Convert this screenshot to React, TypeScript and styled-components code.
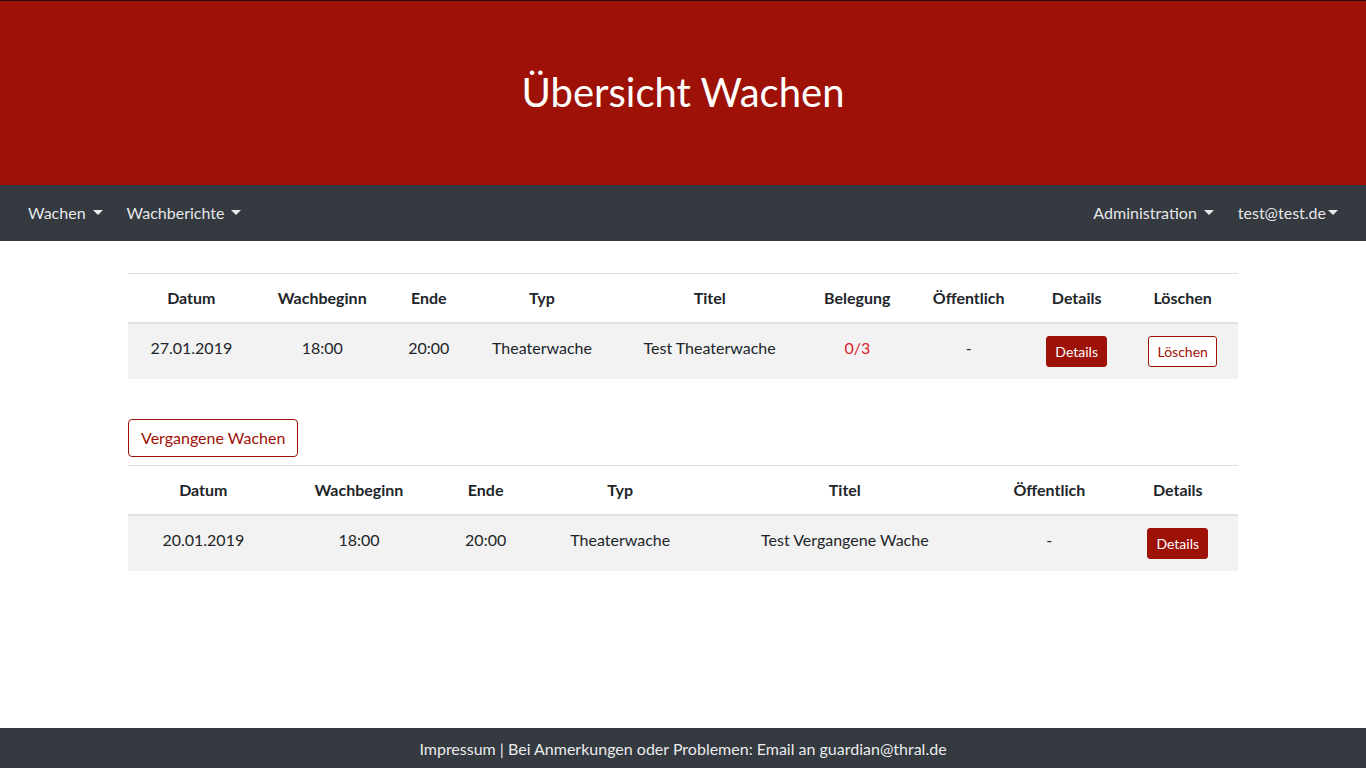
import React from "react";
import styled, { createGlobalStyle } from "styled-components";

const FONT = `"Lato", "Noto Sans", "Liberation Sans", sans-serif`;

const Global = createGlobalStyle`
  html, body { margin: 0; padding: 0; }
  body {
    font-family: ${FONT};
    font-size: 16px;
    line-height: 1.5;
    color: #212529;
    background: #fff;
  }
  * { box-sizing: border-box; }
`;

const Page = styled.div`
  min-height: 768px;
  display: flex;
  flex-direction: column;
`;

const Header = styled.header`
  height: 185px;
  background: #9e1106;
  border-top: 1px solid #2b0a08;
  display: flex;
  align-items: center;
  justify-content: center;
`;

const Title = styled.h1`
  margin: 0 0 2px;
  font-weight: 400;
  font-size: 40px;
  line-height: 1.2;
  color: #fff;
`;

const Navbar = styled.nav`
  height: 56px;
  background: #343a40;
  display: flex;
  align-items: center;
  justify-content: space-between;
  padding: 0 16px;
`;

const NavGroup = styled.div`
  display: flex;
  align-items: center;
`;

const NavLink = styled.a<{ $tight?: boolean }>`
  color: rgba(255, 255, 255, 0.9);
  padding: 8px 12px;
  font-size: 16px;
  display: inline-flex;
  align-items: center;
  cursor: pointer;
  &::after {
    content: "";
    display: inline-block;
    margin-left: ${(p) => (p.$tight ? "2px" : "7px")};
    border-top: 5px solid rgba(255, 255, 255, 0.9);
    border-left: 5px solid transparent;
    border-right: 5px solid transparent;
    margin-top: -2px;
  }
`;

const Main = styled.main`
  width: 1110px;
  margin: 32px auto 0;
  flex: 1;
`;

const Table = styled.table`
  width: 100%;
  border-collapse: collapse;
  margin-bottom: 16px;
  text-align: center;
`;

const Th = styled.th`
  font-weight: 700;
  padding: 12px;
  border-top: 1px solid #dee2e6;
  border-bottom: 2px solid #dee2e6;
  vertical-align: bottom;
  white-space: nowrap;
`;

const Row = styled.tr`
  background: #f2f2f2;
`;

const Td = styled.td<{ $danger?: boolean }>`
  padding: 12px;
  border-top: 1px solid #dee2e6;
  vertical-align: top;
  height: 55px;
  color: ${(p) => (p.$danger ? "#d9232d" : "#212529")};
  white-space: nowrap;
`;

const SmallBtn = styled.button<{ $outline?: boolean }>`
  font-family: ${FONT};
  font-size: 14px;
  line-height: 1.5;
  padding: 4px 8px;
  border-radius: 3px;
  border: 1px solid #9e1106;
  background: ${(p) => (p.$outline ? "#fff" : "#9e1106")};
  color: ${(p) => (p.$outline ? "#9e1106" : "#fff")};
  cursor: pointer;
`;

const OutlineBtn = styled.button`
  font-family: ${FONT};
  font-size: 16px;
  line-height: 1.5;
  padding: 6px 12px;
  border-radius: 4px;
  border: 1px solid #9e1106;
  background: #fff;
  color: #9e1106;
  margin: 24px 0 8px;
  cursor: pointer;
`;

const Footer = styled.footer`
  height: 40px;
  background: #343a40;
  color: rgba(255, 255, 255, 0.92);
  display: flex;
  align-items: center;
  justify-content: center;
  font-size: 16px;
  padding-top: 2px;
`;

export default function App() {
  return (
    <Page>
      <Global />
      <Header>
        <Title>Übersicht Wachen</Title>
      </Header>
      <Navbar>
        <NavGroup>
          <NavLink>Wachen</NavLink>
          <NavLink>Wachberichte</NavLink>
        </NavGroup>
        <NavGroup>
          <NavLink>Administration</NavLink>
          <NavLink $tight>test@test.de</NavLink>
        </NavGroup>
      </Navbar>
      <Main>
        <Table>
          <thead>
            <tr>
              <Th>Datum</Th>
              <Th>Wachbeginn</Th>
              <Th>Ende</Th>
              <Th>Typ</Th>
              <Th>Titel</Th>
              <Th>Belegung</Th>
              <Th>Öffentlich</Th>
              <Th>Details</Th>
              <Th>Löschen</Th>
            </tr>
          </thead>
          <tbody>
            <Row>
              <Td>27.01.2019</Td>
              <Td>18:00</Td>
              <Td>20:00</Td>
              <Td>Theaterwache</Td>
              <Td>Test Theaterwache</Td>
              <Td $danger>0/3</Td>
              <Td>-</Td>
              <Td>
                <SmallBtn>Details</SmallBtn>
              </Td>
              <Td>
                <SmallBtn $outline>Löschen</SmallBtn>
              </Td>
            </Row>
          </tbody>
        </Table>
        <OutlineBtn>Vergangene Wachen</OutlineBtn>
        <Table>
          <thead>
            <tr>
              <Th>Datum</Th>
              <Th>Wachbeginn</Th>
              <Th>Ende</Th>
              <Th>Typ</Th>
              <Th>Titel</Th>
              <Th>Öffentlich</Th>
              <Th>Details</Th>
            </tr>
          </thead>
          <tbody>
            <Row>
              <Td>20.01.2019</Td>
              <Td>18:00</Td>
              <Td>20:00</Td>
              <Td>Theaterwache</Td>
              <Td>Test Vergangene Wache</Td>
              <Td>-</Td>
              <Td>
                <SmallBtn>Details</SmallBtn>
              </Td>
            </Row>
          </tbody>
        </Table>
      </Main>
      <Footer>Impressum | Bei Anmerkungen oder Problemen: Email an guardian@thral.de</Footer>
    </Page>
  );
}
